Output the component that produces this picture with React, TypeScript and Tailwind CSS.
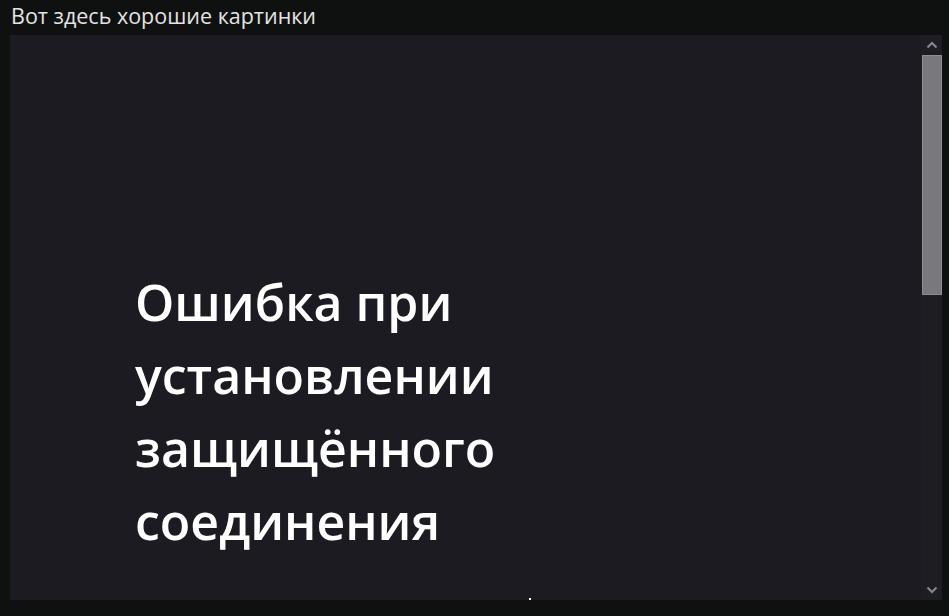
import * as React from "react";

function Chevron({ up }: { up: boolean }) {
	return (
		<svg width="12" height="8" viewBox="0 0 12 8" className="text-[#8a898f]">
			<polyline
				points={up ? "1.5,6.5 6,2 10.5,6.5" : "1.5,1.5 6,6 10.5,1.5"}
				fill="none"
				stroke="currentColor"
				strokeWidth="2"
			/>
		</svg>
	);
}

export default function App() {
	return (
		<div
			className="h-[616px] w-full bg-[#0f1010] flex flex-col overflow-hidden"
			style={{ fontFamily: '"Open Sans", "Noto Sans", sans-serif' }}
		>
			{/* window title */}
			<div className="h-[35px] pl-[11px] pt-[2px] text-[21.5px] leading-[28px] text-[#e4e4e4]">
				Вот здесь хорошие картинки
			</div>

			{/* embedded page */}
			<div className="ml-[10px] mr-[7px] h-[565px] bg-[#1c1b22] flex relative">
				<div className="flex-1 pl-[125px] pt-[231px]">
					<h1 className="w-[380px] text-[50px] leading-[73px] font-semibold text-white">
						Ошибка при установлении защищённого соединения
					</h1>
				</div>

				{/* scrollbar */}
				<div className="w-[21px] flex flex-col bg-[#1e1d24]">
					<div className="h-[20px] flex items-center justify-center">
						<Chevron up />
					</div>
					<div className="h-[240px] ml-[1px] bg-[#79787d] border border-[#8e8d92]" />
					<div className="flex-1" />
					<div className="h-[20px] flex items-center justify-center">
						<Chevron up={false} />
					</div>
				</div>

				<span className="absolute bottom-0 left-[519px] w-[2px] h-[2px] bg-white" />
			</div>
		</div>
	);
}
